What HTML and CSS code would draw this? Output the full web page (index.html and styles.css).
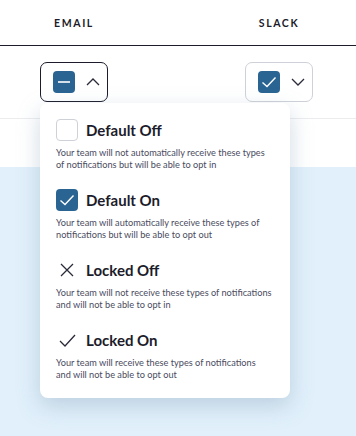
FILE: index.html
```html
<!DOCTYPE html>
<html lang="en">
<head>
  <meta charset="UTF-8">
  <meta name="viewport" content="width=device-width, initial-scale=1.0">
  <title>Notification Settings</title>
  <link rel="stylesheet" href="styles.css">
</head>
<body>

<div class="settings">
  <div class="head">
    <div class="col">EMAIL</div>
    <div class="col">SLACK</div>
  </div>

  <div class="row">
    <div class="picker open">
      <span class="box filled">
        <svg width="14" height="14" viewBox="0 0 14 14"><path d="M1 7h12" stroke="#fff" stroke-width="1.6" fill="none"/></svg>
      </span>
      <svg class="chev" width="14" height="8" viewBox="0 0 14 8"><path d="M1 7l6-6 6 6" stroke="#2a2a3a" stroke-width="1.3" fill="none"/></svg>

      <div class="menu">
        <div class="option">
          <div class="option-head">
            <span class="box empty"></span>
            <span class="title">Default Off</span>
          </div>
          <p>Your team will not automatically receive these types of notifications but will be able to opt in</p>
        </div>
        <div class="option">
          <div class="option-head">
            <span class="box filled">
              <svg width="16" height="12" viewBox="0 0 16 12"><path d="M1.5 6.5l4.5 4 8.5-9" stroke="#fff" stroke-width="1.4" fill="none"/></svg>
            </span>
            <span class="title">Default On</span>
          </div>
          <p>Your team will automatically receive these types of notifications but will be able to opt out</p>
        </div>
        <div class="option">
          <div class="option-head">
            <span class="icon">
              <svg width="14" height="14" viewBox="0 0 14 14"><path d="M1 1l12 12M13 1L1 13" stroke="#2a2a3a" stroke-width="1.3" fill="none"/></svg>
            </span>
            <span class="title">Locked Off</span>
          </div>
          <p>Your team will not receive these types of notifications and will not be able to opt in</p>
        </div>
        <div class="option">
          <div class="option-head">
            <span class="icon">
              <svg width="17" height="13" viewBox="0 0 17 13"><path d="M1 7l5 5 10-11" stroke="#2a2a3a" stroke-width="1.3" fill="none"/></svg>
            </span>
            <span class="title">Locked On</span>
          </div>
          <p>Your team will receive these types of notifications and will not be able to opt out</p>
        </div>
      </div>
    </div>

    <div class="picker">
      <span class="box filled">
        <svg width="16" height="12" viewBox="0 0 16 12"><path d="M1.5 6.5l4.5 4 8.5-9" stroke="#fff" stroke-width="1.4" fill="none"/></svg>
      </span>
      <svg class="chev" width="14" height="8" viewBox="0 0 14 8"><path d="M1 1l6 6 6-6" stroke="#2a2a3a" stroke-width="1.3" fill="none"/></svg>
    </div>
  </div>

  <div class="row blank"></div>
</div>
<div class="backdrop"></div>

</body>
</html>
```

FILE: styles.css
```css
body {
  margin: 0;
  font-family: Lato, 'Noto Sans', sans-serif;
  background-color: #e1f0fb;
  color: #1c1c2b;
  min-height: 100vh;
  display: flex;
  flex-direction: column;
}
.settings {
  background-color: #fff;
  position: relative;
  z-index: 1;
}
.backdrop {
  flex: 1;
  background-color: #e1f0fb;
}
.head {
  display: flex;
  justify-content: space-between;
  padding: 0 43px 0 40px;
  height: 45px;
  align-items: center;
  border-bottom: 1px solid #1c1c2b;
}
.head .col {
  width: 68px;
  text-align: center;
  font-size: 10.5px;
  font-weight: 700;
  letter-spacing: 1.6px;
  margin-top: 1px;
}
.row {
  display: flex;
  justify-content: space-between;
  padding: 16px 43px 16px 40px;
  border-bottom: 1px solid #ececef;
}
.row.blank {
  height: 48px;
  padding: 0;
  border-bottom: none;
}
.picker {
  position: relative;
  width: 68px;
  height: 40px;
  box-sizing: border-box;
  border: 1px solid #cfd1d8;
  border-radius: 7px;
  display: flex;
  align-items: center;
  padding-left: 12px;
  gap: 11px;
}
.picker.open {
  border-color: #1c1c2b;
}
.box {
  width: 22px;
  height: 22px;
  box-sizing: border-box;
  border-radius: 4px;
  display: flex;
  align-items: center;
  justify-content: center;
  flex-shrink: 0;
}
.box.filled {
  background-color: #2a6493;
}
.box.empty {
  border: 1px solid #cfd1d8;
  background-color: #fff;
}
.icon {
  width: 22px;
  height: 22px;
  display: flex;
  align-items: center;
  justify-content: center;
}
.menu {
  position: absolute;
  top: 40px;
  left: -1px;
  width: 250px;
  box-sizing: border-box;
  background-color: #fff;
  border-radius: 8px;
  padding: 16px 16px 17px;
  box-shadow: 0 8px 22px rgba(120, 150, 175, 0.35);
  z-index: 2;
}
.option {
  margin-bottom: 18px;
}
.option:last-child {
  margin-bottom: 0;
}
.option-head {
  display: flex;
  align-items: center;
  gap: 8px;
}
.title {
  font-size: 15px;
  font-weight: 700;
  line-height: 18px;
  margin-top: -1px;
}
.option p {
  margin: 6px 0 0;
  font-size: 9.2px;
  line-height: 12px;
  color: #4a4b5e;
  max-width: 216px;
}
```
